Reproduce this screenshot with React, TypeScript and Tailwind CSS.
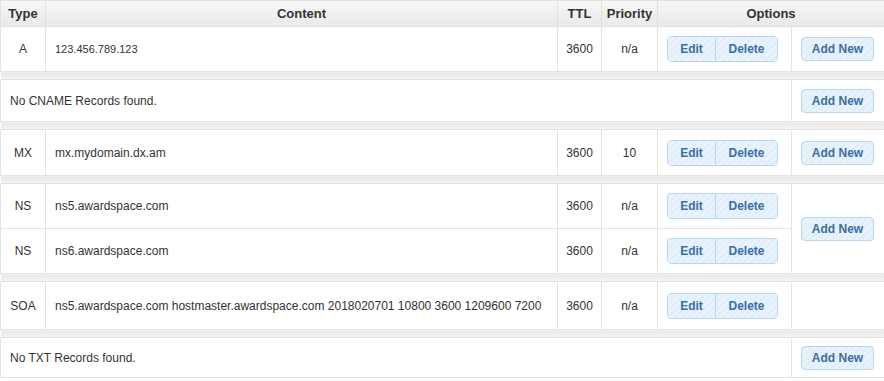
import React from "react";

const stripe =
  "bg-[#e4f0fc] bg-[repeating-linear-gradient(135deg,#e1eefb_0px,#e1eefb_3px,#eaf4fd_3px,#eaf4fd_5px)]";

function EditDelete() {
  return (
    <div className="inline-flex h-[26px] rounded-[4px] border border-[#bcd6ee] overflow-hidden">
      <button className={`${stripe} w-[48px] text-[12px] font-bold text-[#3a6ea5] border-r border-[#bcd6ee]`}>
        Edit
      </button>
      <button className={`${stripe} w-[61px] text-[12px] font-bold text-[#3a6ea5]`}>
        Delete
      </button>
    </div>
  );
}

function AddNew() {
  return (
    <button
      className={`${stripe} h-[24px] w-[73px] rounded-[4px] border border-[#bcd6ee] text-[12px] font-bold text-[#3a6ea5]`}
    >
      Add New
    </button>
  );
}

function Spacer() {
  return (
    <tr className="h-[8px]">
      <td colSpan={6} className="p-0 border-y border-[#e3e3e3] bg-[linear-gradient(#e8e8e8,#f3f3f3)]" />
    </tr>
  );
}

type Rec = { type: string; content: string; ttl: string; prio: string; small?: boolean };

function RecordRow({ r, add, rowSpan, empty, h }: { r: Rec; add?: boolean; rowSpan?: number; empty?: boolean; h: string }) {
  return (
    <tr className={h}>
      <td className="border border-[#e3e3e3] text-center">{r.type}</td>
      <td className={`border border-[#e3e3e3] pl-[9px] ${r.small ? "text-[11px]" : ""}`}>{r.content}</td>
      <td className="border border-[#e3e3e3] text-center">{r.ttl}</td>
      <td className="border border-[#e3e3e3] text-center">{r.prio}</td>
      <td className="border border-[#e3e3e3] pl-[9px]">
        <EditDelete />
      </td>
      {add && (
        <td rowSpan={rowSpan} className="border border-[#e3e3e3] pl-[9px]">
          <AddNew />
        </td>
      )}
      {empty && <td className="border border-[#e3e3e3]" />}
    </tr>
  );
}

function NoneRow({ label, h }: { label: string; h: string }) {
  return (
    <tr className={h}>
      <td colSpan={5} className="border border-[#e3e3e3] pl-[9px]">
        No {label} Records found.
      </td>
      <td className="border border-[#e3e3e3] pl-[9px]">
        <AddNew />
      </td>
    </tr>
  );
}

export default function App() {
  return (
    <div className="bg-white w-[884px] h-[381px] overflow-hidden font-['Liberation_Sans',Arial,sans-serif] text-[12px] text-[#333]">
      <table className="w-[884px] border-collapse table-fixed">
        <colgroup>
          <col className="w-[45px]" />
          <col className="w-[512px]" />
          <col className="w-[44px]" />
          <col className="w-[56px]" />
          <col className="w-[134px]" />
          <col className="w-[93px]" />
        </colgroup>
        <thead>
          <tr className="h-[26px] bg-[linear-gradient(#f6f6f6,#e9e9e9)] text-[13px] font-bold text-[#333]">
            <th className="border border-[#e0e0e0]">Type</th>
            <th className="border border-[#e0e0e0]">Content</th>
            <th className="border border-[#e0e0e0]">TTL</th>
            <th className="border border-[#e0e0e0]">Priority</th>
            <th colSpan={2} className="border border-[#e0e0e0]">Options</th>
          </tr>
        </thead>
        <tbody>
          <RecordRow h="h-[45px]" r={{ type: "A", content: "123.456.789.123", ttl: "3600", prio: "n/a", small: true }} add />
          <Spacer />
          <NoneRow h="h-[42px]" label="CNAME" />
          <Spacer />
          <RecordRow h="h-[46px]" r={{ type: "MX", content: "mx.mydomain.dx.am", ttl: "3600", prio: "10" }} add />
          <Spacer />
          <RecordRow h="h-[45px]" r={{ type: "NS", content: "ns5.awardspace.com", ttl: "3600", prio: "n/a" }} add rowSpan={2} />
          <RecordRow h="h-[45px]" r={{ type: "NS", content: "ns6.awardspace.com", ttl: "3600", prio: "n/a" }} />
          <Spacer />
          <RecordRow
            h="h-[48px]"
            r={{
              type: "SOA",
              content: "ns5.awardspace.com hostmaster.awardspace.com 2018020701 10800 3600 1209600 7200",
              ttl: "3600",
              prio: "n/a",
            }}
            empty
          />
          <Spacer />
          <NoneRow h="h-[40px]" label="TXT" />
        </tbody>
      </table>
    </div>
  );
}
